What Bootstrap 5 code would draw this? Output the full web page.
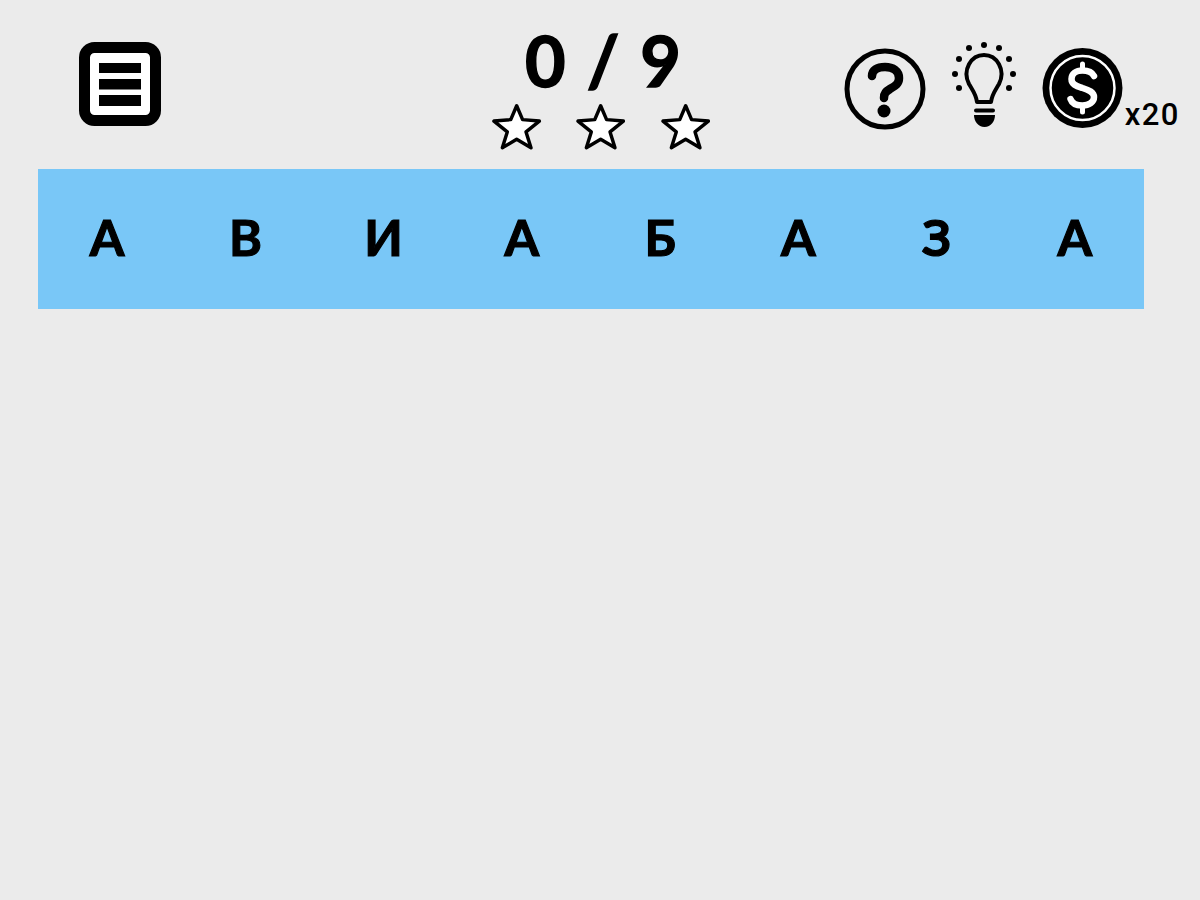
<!DOCTYPE html>
<html lang="ru">
<head>
    <meta charset="UTF-8">
    <meta name="viewport" content="width=device-width, initial-scale=1.0">
    <title>Слова</title>
    <link href="https://cdn.jsdelivr.net/npm/bootstrap@5.3.0/dist/css/bootstrap.min.css" rel="stylesheet">
    <style>
        html, body {
            height: 100%;
        }
        body {
            background-color: #ebebeb;
            color: #000;
            font-family: "Lato", "Open Sans", sans-serif;
            font-weight: 700;
        }
        .game-top {
            display: grid;
            grid-template-columns: 1fr auto 1fr;
            height: 169px;
        }
        .menu-cell {
            padding: 42px 0 0 79px;
        }
        .score-cell {
            padding: 0 0 0 2px;
            width: 222px;
        }
        .score-text {
            font-size: 70px;
            line-height: 1;
            margin-top: 25px;
            padding-left: 4px;
            height: 77px;
            word-spacing: 4px;
            -webkit-text-stroke: 1.5px #000;
        }
        .star-row {
            gap: 33px;
        }
        .tools-cell {
            padding: 42px 20px 0 0;
        }
        .help-icon {
            margin: 3px 23px 0 0;
        }
        .bulb-icon {
            margin-right: 24px;
        }
        .coin-icon {
            margin: 4px 1px 0 0;
        }
        .coin-count {
            font-family: "Roboto", "Liberation Sans", sans-serif;
            font-weight: 500;
            font-size: 31px;
            letter-spacing: 1.5px;
            line-height: 1;
            padding-top: 57px;
        }
        .letter-band {
            display: grid;
            grid-template-columns: repeat(8, 1fr);
            width: 1106px;
            height: 140px;
            margin-left: 38px;
            background-color: #79c7f7;
        }
        .letter-cell {
            font-size: 50px;
            line-height: 1;
            padding-bottom: 5px;
            -webkit-text-stroke: 1.2px #000;
        }
    </style>
</head>
<body>

<div class="game-top">
    <div class="menu-cell">
        <svg width="82" height="84" viewBox="0 0 82 84">
            <rect x="5.500" y="5.500" width="71" height="73" rx="10" fill="#fff" stroke="#000" stroke-width="11"/>
            <rect x="20" y="21" width="42" height="10"/>
            <rect x="20" y="37" width="42" height="10.500"/>
            <rect x="20" y="53" width="42" height="11"/>
        </svg>
    </div>

    <div class="score-cell text-center">
        <div class="score-text">0 / 9</div>
        <div class="star-row d-flex justify-content-center">
            <svg width="52" height="50" viewBox="0 0 52 50"><polygon points="26,3.500 32,17.500 49,19 35.500,30 40.500,46 26,37.500 11.500,46 16.500,30 3,19 20,17.500" fill="#fff" stroke="#000" stroke-width="3.500" stroke-linejoin="round"/></svg>
            <svg width="52" height="50" viewBox="0 0 52 50"><polygon points="26,3.500 32,17.500 49,19 35.500,30 40.500,46 26,37.500 11.500,46 16.500,30 3,19 20,17.500" fill="#fff" stroke="#000" stroke-width="3.500" stroke-linejoin="round"/></svg>
            <svg width="52" height="50" viewBox="0 0 52 50"><polygon points="26,3.500 32,17.500 49,19 35.500,30 40.500,46 26,37.500 11.500,46 16.500,30 3,19 20,17.500" fill="#fff" stroke="#000" stroke-width="3.500" stroke-linejoin="round"/></svg>
        </div>
    </div>

    <div class="tools-cell d-flex justify-content-end align-items-start">
        <svg class="help-icon" width="84" height="88" viewBox="0 0 84 88">
            <circle cx="41" cy="44" r="38" fill="none" stroke="#000" stroke-width="5"/>
            <path d="M28 31C28 25 33 22 41 22C49 22 55 26 55 33C55 39 51 41 46 44C42 46.500 40 48 40 53" fill="none" stroke="#000" stroke-width="8.500" stroke-linecap="round"/>
            <circle cx="40" cy="66" r="6.500"/>
        </svg>
        <svg class="bulb-icon" width="66" height="88" viewBox="0 0 66 88">
            <path d="M26 60C25 52 22 49 18 42C11 28 20 13 33 13C46 13 55 28 48 42C44 49 41 52 40 60Z" fill="none" stroke="#000" stroke-width="4" stroke-linejoin="round"/>
            <rect x="23" y="66.500" width="21" height="4" rx="2"/>
            <path d="M23 73H44C44 79 40 85 33.500 85C27 85 23 79 23 73Z"/>
            <g>
                <circle cx="18" cy="6" r="3"/><circle cx="33" cy="3" r="3"/><circle cx="48" cy="6" r="3"/>
                <circle cx="8" cy="17" r="3"/><circle cx="58" cy="17" r="3"/>
                <circle cx="4" cy="32" r="3"/><circle cx="62" cy="32" r="3"/>
                <circle cx="8" cy="46" r="3"/><circle cx="58" cy="46" r="3"/>
            </g>
        </svg>
        <svg class="coin-icon" width="83" height="84" viewBox="0 0 83 84">
            <circle cx="41.500" cy="42" r="40"/>
            <circle cx="41.500" cy="42" r="32" fill="none" stroke="#fff" stroke-width="2.500"/>
            <path d="M53 30C51 26 47 24.500 41.500 24.500C35 24.500 30.500 28 30.500 33C30.500 38.500 35.500 40 41.500 42C48 44 53 46 53 51C53 56 48 59.500 41.500 59.500C35.500 59.500 31 57.500 29.500 53" fill="none" stroke="#fff" stroke-width="6.500" stroke-linecap="round"/>
            <path d="M41.500 18V24M41.500 60V66" fill="none" stroke="#fff" stroke-width="5" stroke-linecap="round"/>
        </svg>
        <div class="coin-count">x20</div>
    </div>
</div>

<div class="letter-band">
    <div class="letter-cell d-flex align-items-center justify-content-center">А</div>
    <div class="letter-cell d-flex align-items-center justify-content-center">В</div>
    <div class="letter-cell d-flex align-items-center justify-content-center">И</div>
    <div class="letter-cell d-flex align-items-center justify-content-center">А</div>
    <div class="letter-cell d-flex align-items-center justify-content-center">Б</div>
    <div class="letter-cell d-flex align-items-center justify-content-center">А</div>
    <div class="letter-cell d-flex align-items-center justify-content-center">З</div>
    <div class="letter-cell d-flex align-items-center justify-content-center">А</div>
</div>

<script src="https://cdn.jsdelivr.net/npm/bootstrap@5.3.0/dist/js/bootstrap.bundle.min.js"></script>
</body>
</html>
